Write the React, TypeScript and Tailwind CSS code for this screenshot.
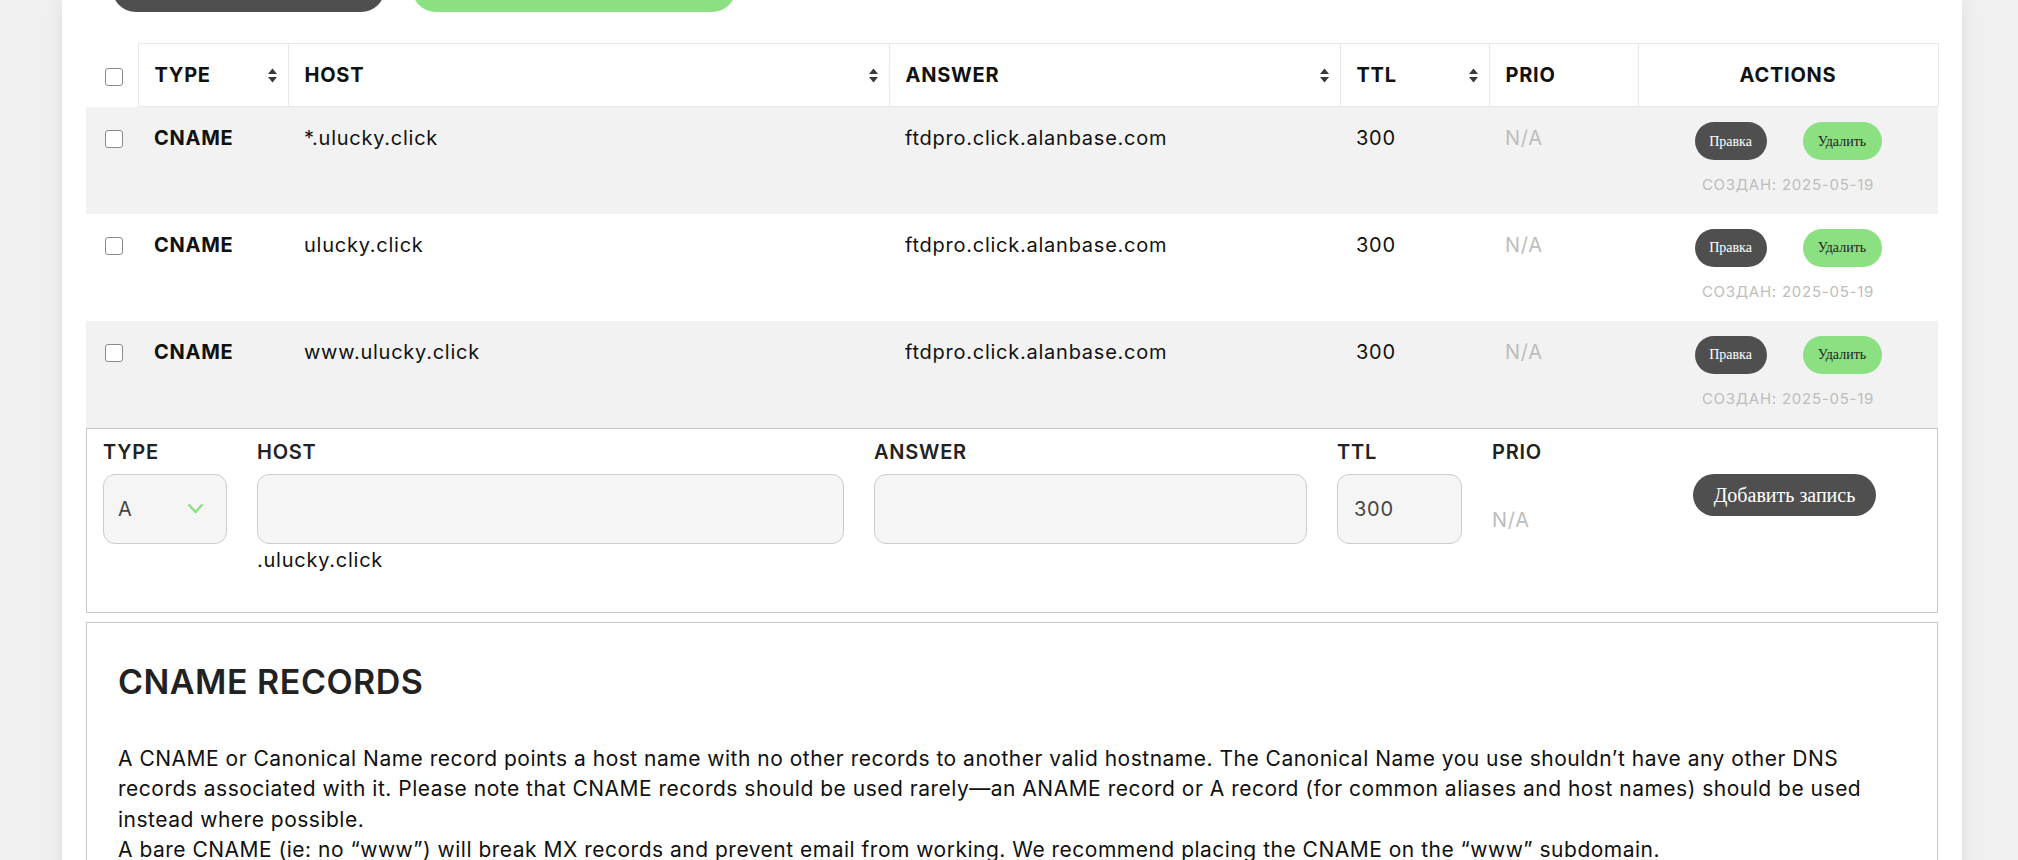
import React from "react";

type DnsRecord = {
  type: string;
  host: string;
  answer: string;
  ttl: number;
  created: string;
};

const records: DnsRecord[] = [
  { type: "CNAME", host: "*.ulucky.click", answer: "ftdpro.click.alanbase.com", ttl: 300, created: "2025-05-19" },
  { type: "CNAME", host: "ulucky.click", answer: "ftdpro.click.alanbase.com", ttl: 300, created: "2025-05-19" },
  { type: "CNAME", host: "www.ulucky.click", answer: "ftdpro.click.alanbase.com", ttl: 300, created: "2025-05-19" },
];

function SortIcon() {
  return (
    <svg width="11" height="15" viewBox="0 0 11 15" className="shrink-0">
      <path d="M5.5 0.5 L10 6 H1 Z" fill="#3a3a3a" />
      <path d="M5.5 14.5 L10 9 H1 Z" fill="#3a3a3a" />
    </svg>
  );
}

function Checkbox() {
  return (
    <span className="inline-block w-[18px] h-[18px] rounded-[3px] border-[1.5px] border-[#8a8a8a] bg-white align-middle" />
  );
}

function HeadCell({ label, sortable }: { label: string; sortable?: boolean }) {
  return (
    <th className="border border-[#e8e8e8] h-[63px] pl-4 pr-[10px] text-left font-bold">
      <div className="flex items-center justify-between">
        <span>{label}</span>
        {sortable && <SortIcon />}
      </div>
    </th>
  );
}

export default function App() {
  return (
    <div className="min-h-screen bg-[#f0f0f0] font-['Inter',sans-serif] tracking-[0.75px] text-[#111]">
      <div className="ml-[62px] w-[1900px] min-h-screen bg-white shadow-[0_0_18px_rgba(0,0,0,0.08)] px-6 pb-16 flex flex-col">
        <div className="flex gap-[27px] pl-[26px] -mt-[36px]">
          <button className="h-[48px] w-[273px] rounded-full bg-[#4f4f4f]" />
          <button className="h-[48px] w-[324px] rounded-full bg-[#8be082]" />
        </div>

        <table className="mt-[31px] w-full table-fixed border-collapse text-[20px]">
          <colgroup>
            <col className="w-[52px]" />
            <col className="w-[150px]" />
            <col className="w-[601px]" />
            <col className="w-[451px]" />
            <col className="w-[149px]" />
            <col className="w-[149px]" />
            <col className="w-[300px]" />
          </colgroup>
          <thead>
            <tr>
              <th className="h-[63px] pl-[19px] text-left">
                <Checkbox />
              </th>
              <HeadCell label="TYPE" sortable />
              <HeadCell label="HOST" sortable />
              <HeadCell label="ANSWER" sortable />
              <HeadCell label="TTL" sortable />
              <HeadCell label="PRIO" />
              <th className="border border-[#e8e8e8] text-center font-bold">ACTIONS</th>
            </tr>
          </thead>
          <tbody>
            {records.map((r, i) => (
              <tr key={r.host} className={i % 2 === 0 ? "bg-[#f2f2f2]" : "bg-white"}>
                <td className="h-[107px] align-top pt-[16px] pl-[19px] leading-[30px]">
                  <Checkbox />
                </td>
                <td className="align-top pt-[16px] px-4 leading-[30px] font-bold">{r.type}</td>
                <td className="align-top pt-[16px] px-4 leading-[30px]">{r.host}</td>
                <td className="align-top pt-[16px] px-4 leading-[30px]">{r.answer}</td>
                <td className="align-top pt-[16px] px-4 leading-[30px]">{r.ttl}</td>
                <td className="align-top pt-[16px] px-4 leading-[30px] text-[#bdbdbd]">N/A</td>
                <td className="align-top pt-[15px] text-center">
                  <div className="flex justify-center gap-9 font-['Liberation_Serif',serif] tracking-normal text-[14px]">
                    <button className="h-[38px] w-[72px] rounded-full bg-[#4f4f4f] text-white">Правка</button>
                    <button className="h-[38px] w-[79px] rounded-full bg-[#8be082] text-[#222]">Удалить</button>
                  </div>
                  <div className="mt-[13px] text-[15px] leading-[24px] text-[#bdbdbd]">СОЗДАН: {r.created}</div>
                </td>
              </tr>
            ))}
          </tbody>
        </table>

        <div className="border border-[#c8c8c8] px-4 pt-[11px] pb-[40px]">
          <div className="flex gap-[30px] text-[20px]">
            <div className="w-[124px]">
              <div className="font-semibold leading-[24px] text-[#222]">TYPE</div>
              <div className="mt-[10px] h-[70px] rounded-[12px] border border-[#cccccc] bg-[#f5f5f5] flex items-center justify-between pl-[14px] pr-[22px] text-[#444]">
                <span>A</span>
                <svg width="17" height="11" viewBox="0 0 17 11" fill="none">
                  <path d="M1.5 1.5 L8.5 9 L15.5 1.5" stroke="#8be082" strokeWidth="2.4" />
                </svg>
              </div>
            </div>
            <div className="w-[587px]">
              <div className="font-semibold leading-[24px] text-[#222]">HOST</div>
              <div className="mt-[10px] h-[70px] rounded-[12px] border border-[#cccccc] bg-[#f5f5f5]" />
              <div className="mt-[4px] leading-[24px]">.ulucky.click</div>
            </div>
            <div className="w-[433px]">
              <div className="font-semibold leading-[24px] text-[#222]">ANSWER</div>
              <div className="mt-[10px] h-[70px] rounded-[12px] border border-[#cccccc] bg-[#f5f5f5]" />
            </div>
            <div className="w-[125px]">
              <div className="font-semibold leading-[24px] text-[#222]">TTL</div>
              <div className="mt-[10px] h-[70px] rounded-[12px] border border-[#cccccc] bg-[#f5f5f5] flex items-center pl-[16px] text-[#444]">
                300
              </div>
            </div>
            <div className="w-[171px]">
              <div className="font-semibold leading-[24px] text-[#222]">PRIO</div>
              <div className="mt-[44px] leading-[24px] text-[#bdbdbd]">N/A</div>
            </div>
            <div className="pt-[34px]">
              <button className="h-[42px] w-[183px] rounded-full bg-[#4f4f4f] text-white font-['Liberation_Serif',serif] tracking-normal text-[20px]">
                Добавить запись
              </button>
            </div>
          </div>
        </div>

        <div className="mt-[9px] border border-[#c8c8c8] px-[31px] pt-[40px] pb-10">
          <h2 className="text-[34px] leading-[38px] font-semibold tracking-[0.5px] text-[#222]">CNAME RECORDS</h2>
          <p className="mt-[43px] text-[21px] leading-[30.5px] tracking-[0.5px]">
            A CNAME or Canonical Name record points a host name with no other records to another valid hostname. The
            Canonical Name you use shouldn’t have any other DNS records associated with it. Please note that CNAME
            records should be used rarely—an ANAME record or A record (for common aliases and host names) should be used
            instead where possible.
            <br />
            A bare CNAME (ie: no “www”) will break MX records and prevent email from working. We recommend placing the
            CNAME on the “www” subdomain.
          </p>
        </div>
      </div>
    </div>
  );
}
